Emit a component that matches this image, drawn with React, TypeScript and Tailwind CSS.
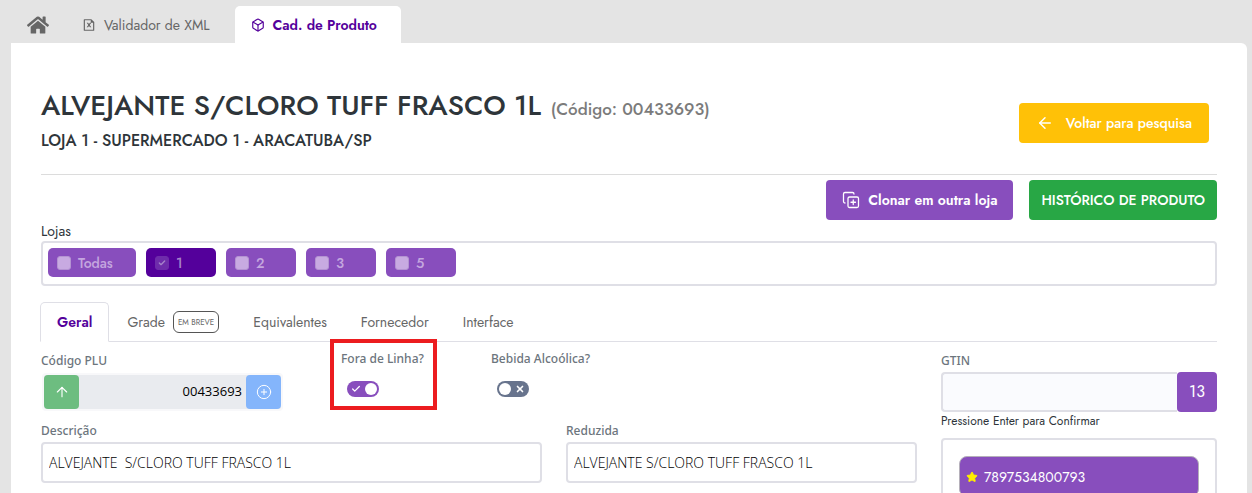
import { useState } from 'react'
import { ArrowLeft, ArrowUp, Box, Check, CirclePlus, CopyPlus, Star, X } from 'lucide-react'
import { FaHome } from 'react-icons/fa'
import { RiFileExcelLine } from 'react-icons/ri'

const LOJAS = [
  { id: 'todas', label: 'Todas', width: 'w-[88px]' },
  { id: '1', label: '1', width: 'w-[70px]' },
  { id: '2', label: '2', width: 'w-[70px]' },
  { id: '3', label: '3', width: 'w-[70px]' },
  { id: '5', label: '5', width: 'w-[70px]' }
]

const ABAS = ['Geral', 'Grade', 'Equivalentes', 'Fornecedor', 'Interface']

const labelClass = "block font-['Noto_Sans',sans-serif] text-xs leading-5 font-medium text-[#6c757d]"
const inputClass =
  "h-[41px] w-full rounded-sm border-2 border-[#dfdfe6] bg-white px-1.5 font-['Open_Sans',sans-serif] text-sm font-light text-black"

interface LojaChipProps {
  label: string
  width: string
  checked: boolean
}

function LojaChip({ label, width, checked }: LojaChipProps) {
  return (
    <label
      className={`flex h-[29px] items-center gap-[7px] rounded-[5px] px-[9px] text-sm font-medium ${width} ${
        checked ? 'bg-[#54009b] text-[#a583c9]' : 'bg-[#884ebd] text-[#c4a6df]'
      }`}
    >
      <span className="relative size-3.5">
        <input
          type="checkbox"
          checked={checked}
          disabled
          className="block size-3.5 appearance-none rounded-[3px] border border-[#b493d2] bg-[#c8aae1] checked:border-[#6e2cab] checked:bg-[#6e2cab]"
        />
        {checked && <Check className="absolute top-[3px] left-[3px] size-2" strokeWidth={4} />}
      </span>
      {label}
    </label>
  )
}

interface SwitchFieldProps {
  id: string
  label: string
  checked: boolean
  onChange: (value: boolean) => void
  highlighted?: boolean
}

function SwitchField({ id, label, checked, onChange, highlighted }: SwitchFieldProps) {
  return (
    <div className="relative col-span-2 -mt-0.5">
      <label htmlFor={id} className={`${labelClass} whitespace-nowrap`}>
        {label}
      </label>
      <div className="relative mt-3 ml-1.5 h-4 w-8">
        <input
          id={id}
          type="checkbox"
          role="switch"
          checked={checked}
          onChange={(e) => onChange(e.target.checked)}
          className="block h-4 w-8 appearance-none rounded-full bg-[#68748d] checked:bg-[#884ebd]"
        />
        <span
          className={`pointer-events-none absolute top-0.5 size-3 rounded-full bg-white ${
            checked ? 'right-0.5' : 'left-0.5'
          }`}
        />
        {checked ? (
          <Check className="pointer-events-none absolute top-[3px] left-1 size-2.5 text-white" strokeWidth={3} />
        ) : (
          <X className="pointer-events-none absolute top-[3px] right-1 size-2.5 text-white" strokeWidth={4} />
        )}
      </div>
      {highlighted && (
        <div className="pointer-events-none absolute -top-2.5 -left-[11px] h-[71px] w-[107px] border-4 border-[#ec1c1f]" />
      )}
    </div>
  )
}

export default function App() {
  const [foraDeLinha, setForaDeLinha] = useState(true)
  const [bebida, setBebida] = useState(false)
  const [aba, setAba] = useState('Geral')

  return (
    <div className="h-screen overflow-hidden bg-[#e4e4e4] pr-[5px] pl-[11px] font-[Jost,Lato,sans-serif] text-[#2e353a]">
      <nav className="flex h-[43px] items-end text-sm text-[#666]">
        <a href="#inicio" aria-label="Início" className="flex h-[37px] items-center px-4">
          <FaHome className="size-[22px]" />
        </a>
        <a href="#validador" className="flex h-[37px] items-center gap-2 px-[17px] pr-[25px]">
          <RiFileExcelLine className="size-3.5" />
          Validador de XML
        </a>
        <a
          href="#produto"
          className="flex h-[37px] items-center gap-2 rounded-t-[5px] bg-white px-4 pr-6 font-semibold text-[#54009b]"
        >
          <Box className="size-3.5" />
          Cad. de Produto
        </a>
      </nav>

      <main className="min-h-full rounded-tr-md bg-white px-[30px] pt-[43px]">
        <header className="flex items-start justify-between border-b border-[#dcdcdc] pb-[23px]">
          <div>
            <h1 className="text-[28px] leading-10 font-medium">
              ALVEJANTE S/CLORO TUFF FRASCO 1L
              <small className="ml-2.5 text-[17px] leading-5 text-[#7b7b7b]">(Código: 00433693)</small>
            </h1>
            <p className="mt-[5px] text-base leading-5 font-medium">LOJA 1 - SUPERMERCADO 1 - ARACATUBA/SP</p>
          </div>
          <button
            type="button"
            className="mt-[17px] mr-2 flex h-10 items-center gap-3 rounded bg-[#ffc107] px-[17px] text-sm font-medium text-white"
          >
            <ArrowLeft className="size-[18px]" />
            Voltar para pesquisa
          </button>
        </header>

        <div className="flex justify-end gap-4 pt-[5px] text-sm text-white">
          <button type="button" className="flex h-10 items-center gap-2 rounded bg-[#884ebd] px-4 font-semibold">
            <CopyPlus className="size-[18px]" strokeWidth={1.7} />
            Clonar em outra loja
          </button>
          <button type="button" className="h-10 rounded bg-[#28a745] px-3 font-medium">
            HISTÓRICO DE PRODUTO
          </button>
        </div>

        <fieldset>
          <legend className="pt-px text-sm leading-5">Lojas</legend>
          <div className="flex gap-2.5 rounded-sm border-2 border-[#dfdfe6] px-[5px] pt-[5px] pb-[7px]">
            {LOJAS.map((loja) => (
              <LojaChip key={loja.id} label={loja.label} width={loja.width} checked={loja.id === '1'} />
            ))}
          </div>
        </fieldset>

        <div role="tablist" className="mt-4 -ml-px flex border-b border-[#dfdfe6] text-sm text-[#666]">
          {ABAS.map((nome) => (
            <button
              key={nome}
              type="button"
              role="tab"
              aria-selected={aba === nome}
              onClick={() => setAba(nome)}
              className={`-mb-px flex h-10 items-center gap-2 rounded-t-[5px] border px-4 first:mr-px ${
                aba === nome
                  ? 'border-[#dfdfe6] border-b-white font-semibold text-[#54009b]'
                  : 'border-transparent'
              }`}
            >
              {nome}
              {nome === 'Grade' && (
                <span className="rounded-md border border-[#555] px-1 text-[8px] leading-5">EM BREVE</span>
              )}
            </button>
          ))}
        </div>

        <div className="grid grid-cols-12 gap-6 pt-[9px]">
          <section className="col-span-9">
            <div className="grid grid-cols-12 gap-x-6">
              <div className="col-span-4">
                <label htmlFor="plu" className={labelClass}>
                  Código PLU
                </label>
                <div className="mt-0.5 ml-px flex h-[38px] w-[241px] rounded border-2 border-[#f8f8fa] bg-[#e9ebef]">
                  <button
                    type="button"
                    aria-label="Carregar código"
                    className="flex w-[35px] items-center justify-center rounded bg-[#6dbd80] text-white"
                  >
                    <ArrowUp className="size-4" strokeWidth={1.7} />
                  </button>
                  <input
                    id="plu"
                    readOnly
                    defaultValue="00433693"
                    className="min-w-0 flex-1 px-1 text-right font-['Open_Sans',sans-serif] text-[13px] text-black"
                  />
                  <button
                    type="button"
                    aria-label="Novo código"
                    className="flex w-[35px] items-center justify-center rounded bg-[#84b5fb] text-white"
                  >
                    <CirclePlus className="size-4" strokeWidth={1.5} />
                  </button>
                </div>
              </div>
              <SwitchField
                id="fora-de-linha"
                label="Fora de Linha?"
                checked={foraDeLinha}
                onChange={setForaDeLinha}
                highlighted
              />
              <SwitchField id="bebida" label="Bebida Alcoólica?" checked={bebida} onChange={setBebida} />
            </div>

            <div className="mt-2.5 grid grid-cols-12 gap-x-6">
              <div className="col-span-7">
                <label htmlFor="descricao" className={labelClass}>
                  Descrição
                </label>
                <input id="descricao" defaultValue="ALVEJANTE  S/CLORO TUFF FRASCO 1L" className={`mt-px ${inputClass}`} />
              </div>
              <div className="col-span-5">
                <label htmlFor="reduzida" className={labelClass}>
                  Reduzida
                </label>
                <input id="reduzida" defaultValue="ALVEJANTE S/CLORO TUFF FRASCO 1L" className={`mt-px ${inputClass}`} />
              </div>
            </div>
          </section>

          <section className="col-span-3">
            <label htmlFor="gtin" className={labelClass}>
              GTIN
            </label>
            <div className="mt-px flex h-10">
              <input
                id="gtin"
                className="min-w-0 flex-1 rounded-l-sm border-2 border-r-0 border-[#dfdfe6] bg-[#fafbfe] px-1.5 text-sm"
              />
              <button type="button" className="w-10 rounded bg-[#884ebd] text-base text-white">
                13
              </button>
            </div>
            <p className="text-xs leading-[18px]">Pressione Enter para Confirmar</p>
            <ul className="mt-2 h-40 rounded-sm border-2 border-[#dfdfe6] p-4">
              <li className="flex h-[41px] items-center gap-1.5 rounded-lg border border-[#b5b0ba] bg-[#884ebd] px-1.5 text-sm text-white">
                <Star className="size-3 fill-[#ffee00] text-[#ffee00]" />
                7897534800793
              </li>
            </ul>
          </section>
        </div>
      </main>
    </div>
  )
}
